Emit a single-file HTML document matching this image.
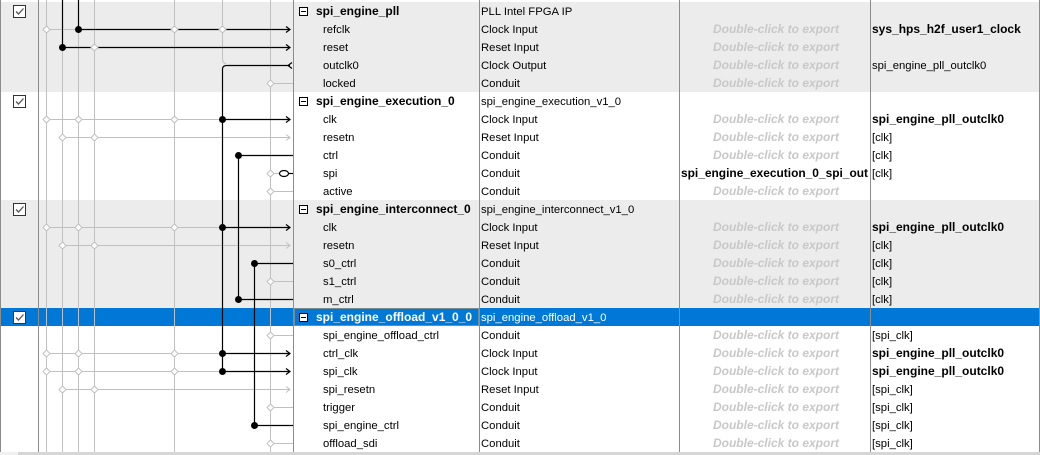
<!DOCTYPE html>
<html><head><meta charset="utf-8"><style>
html,body{margin:0;padding:0;background:#fff;width:1040px;height:455px;overflow:hidden}
svg{display:block}
text{font-family:"Liberation Sans",Tahoma,sans-serif;font-size:11.3px;fill:#000}
.b{font-weight:bold;font-size:12px}
.dc{fill:#c8c8c8;font-style:italic;font-weight:bold;text-anchor:end;font-size:12px}
.g{stroke:#c0c0c0;stroke-width:1;fill:none}
.k{stroke:#000;stroke-width:1.2;fill:none}
.hd{fill:#fff;stroke:#c0c0c0;stroke-width:1}
</style></head><body>
<svg width="1040" height="455" viewBox="0 0 1040 455" xmlns="http://www.w3.org/2000/svg">
<rect x="0" y="2" width="1040" height="90" fill="#ececec"/>
<rect x="0" y="200" width="1040" height="108" fill="#ececec"/>
<rect x="0" y="308" width="1040" height="18" fill="#0078d7"/>
<g stroke="#8c8c8c" stroke-width="1">
<line x1="38.5" y1="0" x2="38.5" y2="452"/>
<line x1="293.5" y1="0" x2="293.5" y2="452"/>
<line x1="479.5" y1="0" x2="479.5" y2="452"/>
<line x1="679.5" y1="0" x2="679.5" y2="452"/>
<line x1="870.5" y1="0" x2="870.5" y2="452"/>
<line x1="1039.5" y1="0" x2="1039.5" y2="452"/>
<line x1="0.5" y1="0" x2="0.5" y2="452"/>
</g>
<rect x="0" y="452" width="1040" height="3" fill="#d6d6d6"/>
<rect x="0" y="452" width="18" height="3" fill="#f0f0f0"/>
<g class="g">
<line x1="46.5" y1="0" x2="46.5" y2="452"/>
<line x1="62.5" y1="0" x2="62.5" y2="452"/>
<line x1="78.5" y1="0" x2="78.5" y2="452"/>
<line x1="94.5" y1="0" x2="94.5" y2="452"/>
<line x1="174.5" y1="0" x2="174.5" y2="452"/>
<path d="M222.5 0 V59 Q222.5 63 226 64"/>
<line x1="270.5" y1="0" x2="270.5" y2="452"/>
</g>
<g class="g">
<line x1="46" y1="29.5" x2="78" y2="29.5"/>
<line x1="62" y1="47.5" x2="94" y2="47.5"/>
<line x1="270" y1="83.5" x2="293" y2="83.5"/>
<line x1="46" y1="119.5" x2="222" y2="119.5"/>
<line x1="62" y1="137.5" x2="290" y2="137.5"/><path d="M286 134.5 L290 137.5 L286 140.5"/>
<line x1="270" y1="173.5" x2="280" y2="173.5"/>
<line x1="270" y1="191.5" x2="293" y2="191.5"/>
<line x1="46" y1="227.5" x2="222" y2="227.5"/>
<line x1="62" y1="245.5" x2="290" y2="245.5"/><path d="M286 242.5 L290 245.5 L286 248.5"/>
<line x1="270" y1="281.5" x2="293" y2="281.5"/>
<line x1="270" y1="335.5" x2="293" y2="335.5"/>
<line x1="46" y1="353.5" x2="222" y2="353.5"/>
<line x1="46" y1="371.5" x2="222" y2="371.5"/>
<line x1="62" y1="389.5" x2="290" y2="389.5"/><path d="M286 386.5 L290 389.5 L286 392.5"/>
<line x1="270" y1="407.5" x2="293" y2="407.5"/>
<line x1="270" y1="443.5" x2="293" y2="443.5"/>
</g>
<g class="k">
<line x1="62.5" y1="0" x2="62.5" y2="47"/>
<line x1="78.5" y1="0" x2="78.5" y2="29"/>
<line x1="78" y1="29.5" x2="290" y2="29.5"/><path d="M286 26.5 L290 29.5 L286 32.5"/>
<line x1="62" y1="47.5" x2="290" y2="47.5"/><path d="M286 44.5 L290 47.5 L286 50.5"/>
<path d="M222.5 371 V69 Q222.5 65.5 227 65.5 H290"/><path d="M292 62.5 L288 65.5 L292 68.5"/>
<line x1="222" y1="119.5" x2="290" y2="119.5"/><path d="M286 116.5 L290 119.5 L286 122.5"/>
<line x1="238.5" y1="155" x2="238.5" y2="299"/>
<line x1="238" y1="155.5" x2="293" y2="155.5"/>
<ellipse cx="284" cy="173.5" rx="4.5" ry="3"/>
<line x1="288.5" y1="173.5" x2="293" y2="173.5"/>
<line x1="222" y1="227.5" x2="290" y2="227.5"/><path d="M286 224.5 L290 227.5 L286 230.5"/>
<line x1="254.5" y1="263" x2="254.5" y2="425"/>
<line x1="254" y1="263.5" x2="293" y2="263.5"/>
<line x1="238" y1="299.5" x2="293" y2="299.5"/>
<line x1="222" y1="353.5" x2="290" y2="353.5"/><path d="M286 350.5 L290 353.5 L286 356.5"/>
<line x1="222" y1="371.5" x2="290" y2="371.5"/><path d="M286 368.5 L290 371.5 L286 374.5"/>
<line x1="254" y1="425.5" x2="293" y2="425.5"/>
</g>
<g class="hd">
<path d="M46.5 26 L50 29.5 L46.5 33 L43 29.5Z"/><path d="M174.5 26 L178 29.5 L174.5 33 L171 29.5Z"/><path d="M222.5 26 L226 29.5 L222.5 33 L219 29.5Z"/>
<path d="M94.5 44 L98 47.5 L94.5 51 L91 47.5Z"/>
<path d="M270.5 80 L274 83.5 L270.5 87 L267 83.5Z"/>
<path d="M46.5 116 L50 119.5 L46.5 123 L43 119.5Z"/><path d="M78.5 116 L82 119.5 L78.5 123 L75 119.5Z"/><path d="M174.5 116 L178 119.5 L174.5 123 L171 119.5Z"/>
<path d="M62.5 134 L66 137.5 L62.5 141 L59 137.5Z"/><path d="M94.5 134 L98 137.5 L94.5 141 L91 137.5Z"/>
<path d="M270.5 170 L274 173.5 L270.5 177 L267 173.5Z"/>
<path d="M270.5 188 L274 191.5 L270.5 195 L267 191.5Z"/>
<path d="M46.5 224 L50 227.5 L46.5 231 L43 227.5Z"/><path d="M78.5 224 L82 227.5 L78.5 231 L75 227.5Z"/><path d="M174.5 224 L178 227.5 L174.5 231 L171 227.5Z"/>
<path d="M62.5 242 L66 245.5 L62.5 249 L59 245.5Z"/><path d="M94.5 242 L98 245.5 L94.5 249 L91 245.5Z"/>
<path d="M270.5 278 L274 281.5 L270.5 285 L267 281.5Z"/>
<path d="M270.5 332 L274 335.5 L270.5 339 L267 335.5Z"/>
<path d="M46.5 350 L50 353.5 L46.5 357 L43 353.5Z"/><path d="M78.5 350 L82 353.5 L78.5 357 L75 353.5Z"/><path d="M174.5 350 L178 353.5 L174.5 357 L171 353.5Z"/>
<path d="M46.5 368 L50 371.5 L46.5 375 L43 371.5Z"/><path d="M78.5 368 L82 371.5 L78.5 375 L75 371.5Z"/><path d="M174.5 368 L178 371.5 L174.5 375 L171 371.5Z"/>
<path d="M62.5 386 L66 389.5 L62.5 393 L59 389.5Z"/><path d="M94.5 386 L98 389.5 L94.5 393 L91 389.5Z"/>
<path d="M270.5 404 L274 407.5 L270.5 411 L267 407.5Z"/>
<path d="M270.5 440 L274 443.5 L270.5 447 L267 443.5Z"/>
</g>
<g fill="#000">
<circle cx="78.5" cy="29.5" r="3.5"/><circle cx="62.5" cy="47.5" r="3.5"/>
<circle cx="222.5" cy="119.5" r="3.5"/><circle cx="238.5" cy="155.5" r="3.5"/>
<circle cx="222.5" cy="227.5" r="3.5"/><circle cx="254.5" cy="263.5" r="3.5"/><circle cx="238.5" cy="299.5" r="3.5"/>
<circle cx="222.5" cy="353.5" r="3.5"/><circle cx="222.5" cy="371.5" r="3.5"/><circle cx="254.5" cy="425.5" r="3.5"/>
</g>
<g>
<rect x="13.5" y="5.5" width="12" height="12" fill="#fff" stroke="#333"/><path d="M16 11.5 L18.5 14 L23.5 8.5" stroke="#555" fill="none" stroke-width="1.3"/>
<rect x="13.5" y="95.5" width="12" height="12" fill="#fff" stroke="#333"/><path d="M16 101.5 L18.5 104 L23.5 98.5" stroke="#555" fill="none" stroke-width="1.3"/>
<rect x="13.5" y="203.5" width="12" height="12" fill="#fff" stroke="#333"/><path d="M16 209.5 L18.5 212 L23.5 206.5" stroke="#555" fill="none" stroke-width="1.3"/>
<rect x="13.5" y="311.5" width="12" height="12" fill="#fff" stroke="#333"/><path d="M16 317.5 L18.5 320 L23.5 314.5" stroke="#555" fill="none" stroke-width="1.3"/>
</g>
<g fill="#fff" stroke="#000">
<rect x="299.5" y="7.5" width="8" height="8"/><rect x="299.5" y="97.5" width="8" height="8"/><rect x="299.5" y="205.5" width="8" height="8"/><rect x="299.5" y="313.5" width="8" height="8"/>
</g>
<g stroke="#000"><line x1="301" y1="11.5" x2="306" y2="11.5"/><line x1="301" y1="101.5" x2="306" y2="101.5"/><line x1="301" y1="209.5" x2="306" y2="209.5"/><line x1="301" y1="317.5" x2="306" y2="317.5"/></g>
<rect x="294.5" y="308.5" width="184" height="17" fill="none" stroke="#f0a040" stroke-dasharray="1,1"/>
<text class="b" x="316" y="15">spi_engine_pll</text>
<text x="323" y="33">refclk</text><text x="323" y="51">reset</text><text x="323" y="69">outclk0</text><text x="323" y="87">locked</text>
<text class="b" x="316" y="105">spi_engine_execution_0</text>
<text x="323" y="123">clk</text><text x="323" y="141">resetn</text><text x="323" y="159">ctrl</text><text x="323" y="177">spi</text><text x="323" y="195">active</text>
<text class="b" x="316" y="213">spi_engine_interconnect_0</text>
<text x="323" y="231">clk</text><text x="323" y="249">resetn</text><text x="323" y="267">s0_ctrl</text><text x="323" y="285">s1_ctrl</text><text x="323" y="303">m_ctrl</text>
<text class="b" x="316" y="321" style="fill:#fff">spi_engine_offload_v1_0_0</text>
<text x="323" y="339">spi_engine_offload_ctrl</text><text x="323" y="357">ctrl_clk</text><text x="323" y="375">spi_clk</text><text x="323" y="393">spi_resetn</text><text x="323" y="411">trigger</text><text x="323" y="429">spi_engine_ctrl</text><text x="323" y="447">offload_sdi</text>
<text x="481" y="15">PLL Intel FPGA IP</text>
<text x="481" y="33">Clock Input</text><text x="481" y="51">Reset Input</text><text x="481" y="69">Clock Output</text><text x="481" y="87">Conduit</text>
<text x="481" y="105">spi_engine_execution_v1_0</text>
<text x="481" y="123">Clock Input</text><text x="481" y="141">Reset Input</text><text x="481" y="159">Conduit</text><text x="481" y="177">Conduit</text><text x="481" y="195">Conduit</text>
<text x="481" y="213">spi_engine_interconnect_v1_0</text>
<text x="481" y="231">Clock Input</text><text x="481" y="249">Reset Input</text><text x="481" y="267">Conduit</text><text x="481" y="285">Conduit</text><text x="481" y="303">Conduit</text>
<text x="481" y="321" style="fill:#fff">spi_engine_offload_v1_0</text>
<text x="481" y="339">Conduit</text><text x="481" y="357">Clock Input</text><text x="481" y="375">Clock Input</text><text x="481" y="393">Reset Input</text><text x="481" y="411">Conduit</text><text x="481" y="429">Conduit</text><text x="481" y="447">Conduit</text>
<g>
<text class="dc" x="839" y="33">Double-click to export</text><text class="dc" x="839" y="51">Double-click to export</text><text class="dc" x="839" y="69">Double-click to export</text><text class="dc" x="839" y="87">Double-click to export</text>
<text class="dc" x="839" y="123">Double-click to export</text><text class="dc" x="839" y="141">Double-click to export</text><text class="dc" x="839" y="159">Double-click to export</text><text class="dc" x="839" y="195">Double-click to export</text>
<text class="dc" x="839" y="231">Double-click to export</text><text class="dc" x="839" y="249">Double-click to export</text><text class="dc" x="839" y="267">Double-click to export</text><text class="dc" x="839" y="285">Double-click to export</text><text class="dc" x="839" y="303">Double-click to export</text>
<text class="dc" x="839" y="339">Double-click to export</text><text class="dc" x="839" y="357">Double-click to export</text><text class="dc" x="839" y="375">Double-click to export</text><text class="dc" x="839" y="393">Double-click to export</text><text class="dc" x="839" y="411">Double-click to export</text><text class="dc" x="839" y="429">Double-click to export</text><text class="dc" x="839" y="447">Double-click to export</text>
</g>
<text class="b" x="681" y="177" textLength="187" lengthAdjust="spacingAndGlyphs">spi_engine_execution_0_spi_out</text>
<text class="b" x="872" y="33">sys_hps_h2f_user1_clock</text>
<text x="872" y="69">spi_engine_pll_outclk0</text>
<text class="b" x="872" y="123">spi_engine_pll_outclk0</text>
<text x="872" y="141">[clk]</text><text x="872" y="159">[clk]</text><text x="872" y="177">[clk]</text>
<text class="b" x="872" y="231">spi_engine_pll_outclk0</text>
<text x="872" y="249">[clk]</text><text x="872" y="267">[clk]</text><text x="872" y="285">[clk]</text><text x="872" y="303">[clk]</text>
<text x="872" y="339">[spi_clk]</text>
<text class="b" x="872" y="357">spi_engine_pll_outclk0</text>
<text class="b" x="872" y="375">spi_engine_pll_outclk0</text>
<text x="872" y="393">[spi_clk]</text><text x="872" y="411">[spi_clk]</text><text x="872" y="429">[spi_clk]</text><text x="872" y="447">[spi_clk]</text>
</svg>
</body></html>
